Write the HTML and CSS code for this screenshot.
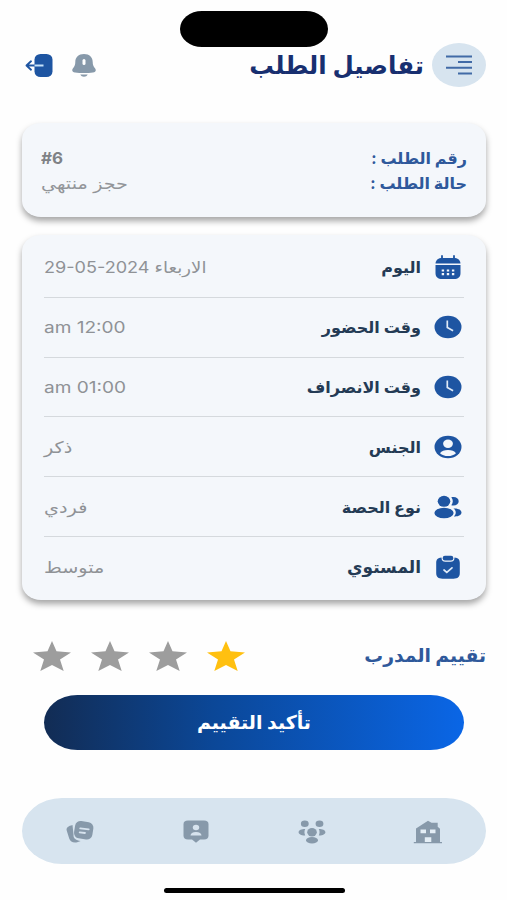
FILE: index.html
```
<!DOCTYPE html>
<html lang="ar" dir="rtl">
<head>
    <meta charset="UTF-8">
    <meta name="viewport" content="width=device-width, initial-scale=1.0">
    <title>تفاصيل الطلب</title>
    <link rel="stylesheet" href="styles.css">
</head>
<body>
    <div class="island"></div>

    <header class="header">
        <button class="menu-btn">
            <svg width="26" height="20" viewBox="0 0 26 20" fill="none" stroke="#416aa6" stroke-width="2">
                <path d="M0 1.500h26M12 7h14M0 12.700h26M12 18.400h14"/>
            </svg>
        </button>
        <h1 class="title">تفاصيل الطلب</h1>
        <svg class="bell" width="24" height="23" viewBox="0 0 24 23" fill="#8799aa">
            <path d="M12 0C6.500 0 3.300 3.300 3.300 8c0 3-.8 4.500-2.300 6.300C-.6 16.300.4 18 3 18.400c5.500.8 12.500.8 18 0 2.600-.4 3.600-2.100 2-4.100-1.500-1.800-2.300-3.300-2.300-6.300C20.700 3.300 17.500 0 12 0z"/>
            <path d="M8.300 20.500h7.400c-.8 1.500-2 2.200-3.700 2.200s-2.900-.7-3.700-2.200z"/>
            <path d="M12 6.500v3" stroke="#fff" stroke-width="3" stroke-linecap="round"/>
        </svg>
        <svg width="28" height="23" viewBox="0 0 28 23" fill="none">
            <rect x="9.500" y="0" width="18" height="23" rx="6" ry="5.500" fill="#1e55a2"/>
            <path d="M1.500 11.500H10M6 7.300l-4.500 4.200L6 15.700" stroke="#1e55a2" stroke-width="1.900" stroke-linecap="round" stroke-linejoin="round"/>
            <path d="M9.500 11.500H18.500" stroke="#c5e2fa" stroke-width="2"/>
        </svg>
    </header>

    <section class="card order">
        <div class="order-row">
            <span class="order-label">رقم الطلب :</span>
            <span class="order-number" dir="ltr">#6</span>
        </div>
        <div class="order-row">
            <span class="order-label">حالة الطلب :</span>
            <span class="order-status">حجز منتهي</span>
        </div>
    </section>

    <section class="card details">
        <div class="row">
            <svg class="icon" viewBox="0 0 28 24" fill="#1e55a2">
                <path d="M8 1v4M20 1v4" stroke="#1e55a2" stroke-width="1.800" stroke-linecap="round"/>
                <path d="M1.500 8.500C2 4.500 4.500 3 8 3h12c3.500 0 6 1.500 6.500 5.500z"/>
                <path d="M1.500 10h25v8c0 4-2.500 6-6.500 6H8c-4 0-6.500-2-6.500-6z"/>
                <path d="M7.700 15.500h2.400M12.800 15.500h2.400M17.900 15.500h2.400M7.700 19.200h2.400M12.800 19.200h2.400M17.900 19.200h2.400" stroke="#f4f7fb" stroke-width="2.200"/>
            </svg>
            <span class="label">اليوم</span>
            <span class="value date">الاربعاء <bdi dir="ltr">29-05-2024</bdi></span>
        </div>
        <div class="row">
            <svg class="icon" viewBox="0 0 28 24">
                <ellipse cx="14" cy="12" rx="13.500" ry="11.300" fill="#1e55a2"/>
                <path d="M13.300 5.500v7l5.800 3.300" fill="none" stroke="#dfeaf7" stroke-width="1.700"/>
            </svg>
            <span class="label">وقت الحضور</span>
            <span class="value time" dir="ltr">am 12:00</span>
        </div>
        <div class="row">
            <svg class="icon" viewBox="0 0 28 24">
                <ellipse cx="14" cy="12" rx="13.500" ry="11.300" fill="#1e55a2"/>
                <path d="M13.300 5.500v7l5.800 3.300" fill="none" stroke="#dfeaf7" stroke-width="1.700"/>
            </svg>
            <span class="label">وقت الانصراف</span>
            <span class="value time" dir="ltr">am 01:00</span>
        </div>
        <div class="row">
            <svg class="icon" viewBox="0 0 28 24">
                <ellipse cx="14" cy="12" rx="13.500" ry="11.300" fill="#1e55a2"/>
                <ellipse cx="14" cy="8.800" rx="4.900" ry="4.200" fill="#f4f7fb"/>
                <path d="M6 18.200c1.500-2.200 4.400-3.200 8-3.200s6.500 1 8 3.200c-2 1.900-4.700 2.800-8 2.800s-6-.9-8-2.800z" fill="#f4f7fb"/>
            </svg>
            <span class="label">الجنس</span>
            <span class="value">ذكر</span>
        </div>
        <div class="row">
            <svg class="icon" viewBox="0 0 28 24" fill="#1e55a2">
                <ellipse cx="10" cy="6.300" rx="6.300" ry="5.500"/>
                <ellipse cx="10" cy="18" rx="9.600" ry="5.300"/>
                <path d="M17.300 2.300c4.200-.9 7.400.8 7.400 4s-3.200 4.900-7.400 4c2-2.300 2-5.700 0-8z"/>
                <path d="M19.500 13.500c5-.2 8 1.400 8 4.100 0 2.600-3.100 4.200-7.600 3.900 2.600-2.500 2.500-5.800-.4-8z"/>
            </svg>
            <span class="label">نوع الحصة</span>
            <span class="value">فردي</span>
        </div>
        <div class="row">
            <svg class="icon" viewBox="0 0 28 24">
                <path d="M7.500 2.500c-3.700.3-5.300 2-5.300 5.500v10c0 4 2 5.700 6.300 5.700h11c4.300 0 6.300-1.700 6.300-5.700V8c0-3.500-1.600-5.200-5.300-5.500 0 3-1.300 4.300-4 4.300h-5c-2.700 0-4-1.300-4-4.300z" fill="#1e55a2"/>
                <rect x="8.700" y="0.800" width="10.600" height="4.600" rx="2.200" fill="#1e55a2"/>
                <path d="M10 15l2.800 2.400 5.200-4.600" fill="none" stroke="#dfeaf7" stroke-width="1.700" stroke-linecap="round"/>
            </svg>
            <span class="label level">المستوي</span>
            <span class="value">متوسط</span>
        </div>
    </section>

    <section class="rating">
        <h2 class="rating-title">تقييم المدرب</h2>
        <div class="stars">
            <svg class="star active" viewBox="0 0 38 30"><path d="M19 0l4.500 10.300L38 11.400 27 18.500 30.700 30 19 23.900 7.300 30 11 18.500 0 11.400l14.500-1.100z"/></svg>
            <svg class="star" viewBox="0 0 38 30"><path d="M19 0l4.500 10.300L38 11.400 27 18.500 30.700 30 19 23.900 7.300 30 11 18.500 0 11.400l14.500-1.100z"/></svg>
            <svg class="star" viewBox="0 0 38 30"><path d="M19 0l4.500 10.300L38 11.400 27 18.500 30.700 30 19 23.900 7.300 30 11 18.500 0 11.400l14.500-1.100z"/></svg>
            <svg class="star" viewBox="0 0 38 30"><path d="M19 0l4.500 10.300L38 11.400 27 18.500 30.700 30 19 23.900 7.300 30 11 18.500 0 11.400l14.500-1.100z"/></svg>
        </div>
    </section>

    <button class="confirm-btn">تأكيد التقييم</button>

    <nav class="navbar">
        <svg class="nav-icon" viewBox="0 0 30 24" fill="#8799aa">
            <path d="M3 22V8.500L15 .8l3.500 2h6.200v4l2.300 2V22h2v1.300H.8V22z"/>
            <path d="M7.500 9.500H13v3.700H7.500zM17 9.500h5.500v3.700H17zM11.800 17.300h6.500v4.700h-6.500z" fill="#e4eef6"/>
        </svg>
        <svg class="nav-icon" viewBox="0 0 30 24" fill="#8799aa">
            <ellipse cx="7.800" cy="3.800" rx="3.900" ry="3.200"/>
            <ellipse cx="22.500" cy="3.800" rx="3.900" ry="3.200"/>
            <ellipse cx="15" cy="12.200" rx="4.800" ry="4.200"/>
            <ellipse cx="15" cy="20.200" rx="6" ry="3.200"/>
            <path d="M8.200 9c-3.600 0-6.600 1.200-6.600 3.200s3 3.400 6.600 3.200c-1-2-1-4.400 0-6.400zM21.800 9c3.600 0 6.600 1.200 6.600 3.200s-3 3.400-6.600 3.200c1-2 1-4.400 0-6.400z"/>
        </svg>
        <svg class="nav-icon" viewBox="0 0 30 24" fill="#8799aa">
            <path d="M7 .5h16c3 0 4.500 1.300 4.500 3.700v11.600c0 2.400-1.500 3.700-4.500 3.700h-4L15 22.800l-4-3.300H7c-3 0-4.500-1.300-4.500-3.700V4.200C2.500 1.800 4 .5 7 .5z"/>
            <ellipse cx="15" cy="7.500" rx="3.200" ry="2.700" fill="#d7e3ee"/>
            <path d="M9.500 15.500c0-2 2-3.600 5.500-3.600s5.500 1.600 5.500 3.600z" fill="#d7e3ee"/>
        </svg>
        <svg class="nav-icon" viewBox="0 0 30 24" fill="#8799aa">
            <path d="M7.500 5C3.500 6 1 7.500 1.700 10.500l2.500 8c1.200 3.500 4 4.500 8 3.800l3.500-1.300c-4.600-.5-7.600-2.500-7.200-6.500z"/>
            <rect x="9.500" y="1.500" width="18.500" height="17.500" rx="5.500" transform="rotate(9 18.500 10)"/>
            <path d="M15.200 8.300l8.500 1.100M14.700 12.300l5.300.7" stroke="#d7e3ee" stroke-width="1.800" stroke-linecap="round"/>
        </svg>
    </nav>

    <div class="home-bar"></div>
</body>
</html>
```
FILE: styles.css
```
* {
    box-sizing: border-box;
}
body {
    margin: 0;
    padding: 11px 21px 0 22px;
    height: 900px;
    overflow: hidden;
    background-color: #fefefe;
    font-family: Inter, "DejaVu Sans", sans-serif;
    display: flex;
    flex-direction: column;
}
.island {
    width: 148px;
    height: 36px;
    margin: 0 auto;
    border-radius: 22px / 18px;
    background-color: #000;
    flex-shrink: 0;
}
.header {
    display: flex;
    align-items: center;
    height: 44px;
    margin-top: -4px;
    padding-left: 3px;
    flex-shrink: 0;
}
.menu-btn {
    width: 54px;
    height: 44px;
    padding: 0;
    border: none;
    border-radius: 50%;
    background-color: #d7e4ef;
    display: flex;
    align-items: center;
    justify-content: center;
}
.title {
    margin: 0 8px 0 auto;
    font-size: 24.5px;
    line-height: 44px;
    color: #182f70;
    white-space: nowrap;
}
.bell {
    margin-left: 19px;
}
.card {
    background-color: #f4f7fb;
    border-radius: 19px / 16px;
    box-shadow: 0 4px 6px rgba(0, 0, 0, 0.35);
    flex-shrink: 0;
}
.order {
    height: 94px;
    margin-top: 36px;
    padding: 23px 19px 0;
}
.order-row {
    display: flex;
    justify-content: space-between;
    height: 25px;
    line-height: 25px;
    white-space: nowrap;
}
.order-label {
    font-size: 16px;
    font-weight: bold;
    color: #2f599b;
}
.order-number {
    font-size: 16px;
    font-weight: bold;
    color: #7f8286;
    transform: scaleX(1.06);
    transform-origin: left;
}
.order-status {
    font-size: 16px;
    color: #929599;
    transform: scaleX(1.2);
    transform-origin: left;
}
.details {
    height: 365px;
    margin-top: 18px;
    padding: 3px 22px 0;
}
.row {
    display: flex;
    align-items: center;
    height: 59.8px;
    border-bottom: 1px solid #d5d9dd;
    white-space: nowrap;
}
.row:last-child {
    border-bottom: none;
}
.icon {
    width: 28px;
    height: 24px;
    margin-right: 2px;
}
.label {
    margin-right: 13px;
    font-size: 16px;
    font-weight: bold;
    color: #243b55;
}
.label.level {
    font-size: 17px;
}
.value {
    margin-right: auto;
    font-size: 16px;
    color: #8f9296;
    transform: scaleX(1.2);
    transform-origin: left;
}
.value.date {
    transform: scaleX(1.13);
}
.value.time {
    transform: scaleX(1.19);
}
.rating {
    display: flex;
    align-items: center;
    justify-content: space-between;
    height: 30px;
    margin-top: 41px;
    padding-left: 11px;
    flex-shrink: 0;
}
.rating-title {
    margin: 0;
    font-size: 18.8px;
    line-height: 30px;
    color: #2f599b;
    white-space: nowrap;
}
.stars {
    display: flex;
    gap: 20px;
}
.star {
    width: 38px;
    height: 30px;
    fill: #9d9d9d;
}
.star.active {
    fill: #ffc010;
}
.confirm-btn {
    height: 55px;
    margin: 24px 22px 0;
    padding: 0;
    border: none;
    border-radius: 34px / 28px;
    background: linear-gradient(to right, #122c54, #0b4797 40%, #0a66e6);
    color: #fff;
    font-family: inherit;
    font-size: 19px;
    font-weight: bold;
    flex-shrink: 0;
}
.navbar {
    display: flex;
    align-items: center;
    justify-content: space-between;
    height: 66px;
    margin-top: 48px;
    padding: 1px 43px 0;
    border-radius: 40px / 33px;
    background-color: #d7e4ef;
    flex-shrink: 0;
}
.nav-icon {
    width: 30px;
    height: 24px;
}
.home-bar {
    width: 181px;
    height: 5px;
    margin: 24px auto 0;
    border-radius: 3px;
    background-color: #000;
    flex-shrink: 0;
}
```
